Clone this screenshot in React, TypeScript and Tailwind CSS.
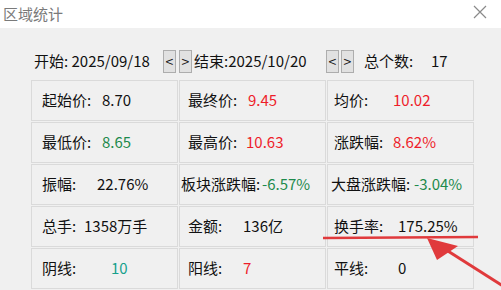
const font = { fontFamily: '"Microsoft YaHei", "Noto Sans CJK SC", "Noto Sans", sans-serif' }

type Cell = {
  label: string
  value: string
  labelLeft: number
  valueLeft: number
  color: string
}

const RED = 'text-[#ee1d2a]'
const GREEN = 'text-[#1d8a4c]'
const TEAL = 'text-[#16a08c]'
const BLACK = 'text-[#111]'

const cells: Cell[] = [
  { label: '起始价:', value: '8.70', labelLeft: 10, valueLeft: 70, color: BLACK },
  { label: '最终价:', value: '9.45', labelLeft: 8, valueLeft: 68, color: RED },
  { label: '均价:', value: '10.02', labelLeft: 6, valueLeft: 65, color: RED },
  { label: '最低价:', value: '8.65', labelLeft: 10, valueLeft: 70, color: GREEN },
  { label: '最高价:', value: '10.63', labelLeft: 8, valueLeft: 66, color: RED },
  { label: '涨跌幅:', value: '8.62%', labelLeft: 6, valueLeft: 65, color: RED },
  { label: '振幅:', value: '22.76%', labelLeft: 10, valueLeft: 65, color: BLACK },
  { label: '板块涨跌幅:', value: '-6.57%', labelLeft: 1, valueLeft: 82, color: GREEN },
  { label: '大盘涨跌幅:', value: '-3.04%', labelLeft: 3, valueLeft: 86, color: GREEN },
  { label: '总手:', value: '1358万手', labelLeft: 10, valueLeft: 52, color: BLACK },
  { label: '金额:', value: '136亿', labelLeft: 8, valueLeft: 63, color: BLACK },
  { label: '换手率:', value: '175.25%', labelLeft: 6, valueLeft: 70, color: BLACK },
  { label: '阴线:', value: '10', labelLeft: 10, valueLeft: 79, color: TEAL },
  { label: '阳线:', value: '7', labelLeft: 8, valueLeft: 63, color: RED },
  { label: '平线:', value: '0', labelLeft: 6, valueLeft: 70, color: BLACK },
]

function StepButton({ children }: { children: React.ReactNode }) {
  return (
    <span className="flex h-[23px] w-[13px] items-center justify-center border border-[#adadad] bg-[#e1e1e1] text-[14px] leading-none text-[#111]">
      {children}
    </span>
  )
}

function StatCell({ cell }: { cell: Cell }) {
  return (
    <div className="flex h-[41px] items-center border border-[#dadada] text-[15px] whitespace-nowrap">
      <span className="shrink-0 text-[#111]" style={{ marginLeft: cell.labelLeft, width: cell.valueLeft - cell.labelLeft }}>
        {cell.label}
      </span>
      <span className={cell.color}>{cell.value}</span>
    </div>
  )
}

export default function App() {
  return (
    <div className="relative h-[290px] w-[501px] overflow-hidden bg-[#f0f0f0]" style={font}>
      <div className="flex h-[28px] items-center justify-between bg-white pl-[3px] pr-[14px]">
        <span className="text-[15px] text-[#7a7a7a]">区域统计</span>
        <svg width="14" height="14" viewBox="0 0 14 14" className="mb-[4px]">
          <path d="M1 1 L13 13 M13 1 L1 13" stroke="#8a8a8a" strokeWidth="1.2" />
        </svg>
      </div>

      <div className="flex h-[46px] items-center pt-[20px] text-[15px] text-[#111] whitespace-nowrap">
        <span className="ml-[34px] w-[129px]">开始: 2025/09/18</span>
        <StepButton>&lt;</StepButton>
        <span className="ml-[3px]"><StepButton>&gt;</StepButton></span>
        <span className="ml-[2px] w-[132px]">结束:2025/10/20</span>
        <StepButton>&lt;</StepButton>
        <span className="ml-[2px]"><StepButton>&gt;</StepButton></span>
        <span className="ml-[10px] w-[67px]">总个数:</span>
        <span>17</span>
      </div>

      <div className="ml-[31px] mt-[6px] grid w-[443px] grid-cols-3 gap-[1px]">
        {cells.map((c) => (
          <StatCell key={c.label} cell={c} />
        ))}
      </div>

      <svg className="pointer-events-none absolute left-0 top-0" width="501" height="290" viewBox="0 0 501 290">
        <line x1="323" y1="238" x2="478" y2="237" stroke="#e03a3c" strokeWidth="2.5" />
        <line x1="440" y1="246" x2="506" y2="288" stroke="#e03a3c" strokeWidth="3" />
        <polygon points="427,238 458,246 437,260" fill="#e03a3c" />
      </svg>
    </div>
  )
}
